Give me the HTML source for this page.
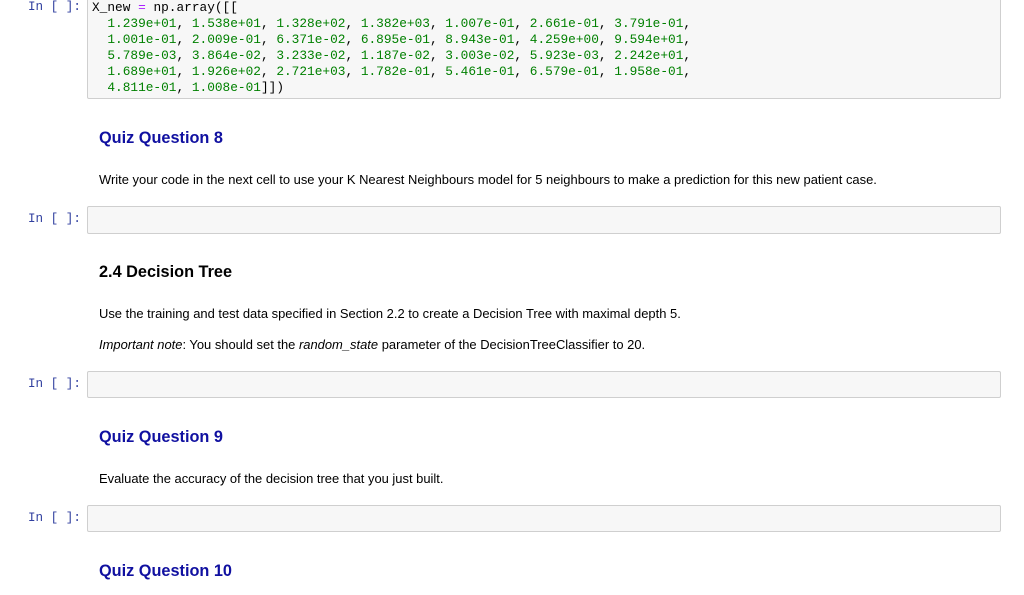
<!DOCTYPE html>
<html><head><style>
body{margin:0;width:1024px;height:595px;background:#fff;position:relative;overflow:hidden;font-family:"Liberation Sans",sans-serif;}
.a{position:absolute;}
.p{position:absolute;left:28px;font:12.6px "Liberation Mono",monospace;color:#303f9f;}
.box{position:absolute;left:87px;width:912px;background:#f7f7f7;border:1px solid #cfcfcf;border-radius:2px;}
pre{margin:0;font:12.8px/16px "Liberation Mono",monospace;color:#000;}
.g{color:#008000}.o{color:#aa22ff}
.q{position:absolute;left:99px;color:#1010a0;font-weight:bold;font-size:16.3px;}
.t{position:absolute;left:99px;font-size:12.95px;color:#000;}
</style></head><body>
<div class="box" style="top:-4px;height:101px;"></div>
<div class="p" style="top:0px;">In [ ]:</div>
<pre class="a" style="left:92px;top:0px;">X_new <span class="o">=</span> np.array([[
  <span class="g">1.239e+01</span>, <span class="g">1.538e+01</span>, <span class="g">1.328e+02</span>, <span class="g">1.382e+03</span>, <span class="g">1.007e-01</span>, <span class="g">2.661e-01</span>, <span class="g">3.791e-01</span>,
  <span class="g">1.001e-01</span>, <span class="g">2.009e-01</span>, <span class="g">6.371e-02</span>, <span class="g">6.895e-01</span>, <span class="g">8.943e-01</span>, <span class="g">4.259e+00</span>, <span class="g">9.594e+01</span>,
  <span class="g">5.789e-03</span>, <span class="g">3.864e-02</span>, <span class="g">3.233e-02</span>, <span class="g">1.187e-02</span>, <span class="g">3.003e-02</span>, <span class="g">5.923e-03</span>, <span class="g">2.242e+01</span>,
  <span class="g">1.689e+01</span>, <span class="g">1.926e+02</span>, <span class="g">2.721e+03</span>, <span class="g">1.782e-01</span>, <span class="g">5.461e-01</span>, <span class="g">6.579e-01</span>, <span class="g">1.958e-01</span>,
  <span class="g">4.811e-01</span>, <span class="g">1.008e-01</span>]])</pre>

<div class="q" style="top:129px;">Quiz Question 8</div>
<div class="t" style="top:172px;">Write your code in the next cell to use your K Nearest Neighbours model for 5 neighbours to make a prediction for this new patient case.</div>
<div class="box" style="top:206px;height:26px;"></div>
<div class="p" style="top:212px;">In [ ]:</div>

<div class="a" style="left:99px;top:263px;font-size:16.3px;font-weight:bold;color:#000;">2.4 Decision Tree</div>
<div class="t" style="top:306px;">Use the training and test data specified in Section 2.2 to create a Decision Tree with maximal depth 5.</div>
<div class="t" style="top:337px;"><i>Important note</i>: You should set the <i>random_state</i> parameter of the DecisionTreeClassifier to 20.</div>
<div class="box" style="top:371px;height:25px;"></div>
<div class="p" style="top:377px;">In [ ]:</div>

<div class="q" style="top:428px;">Quiz Question 9</div>
<div class="t" style="top:471px;">Evaluate the accuracy of the decision tree that you just built.</div>
<div class="box" style="top:505px;height:25px;"></div>
<div class="p" style="top:511px;">In [ ]:</div>

<div class="q" style="top:562px;">Quiz Question 10</div>
</body></html>
